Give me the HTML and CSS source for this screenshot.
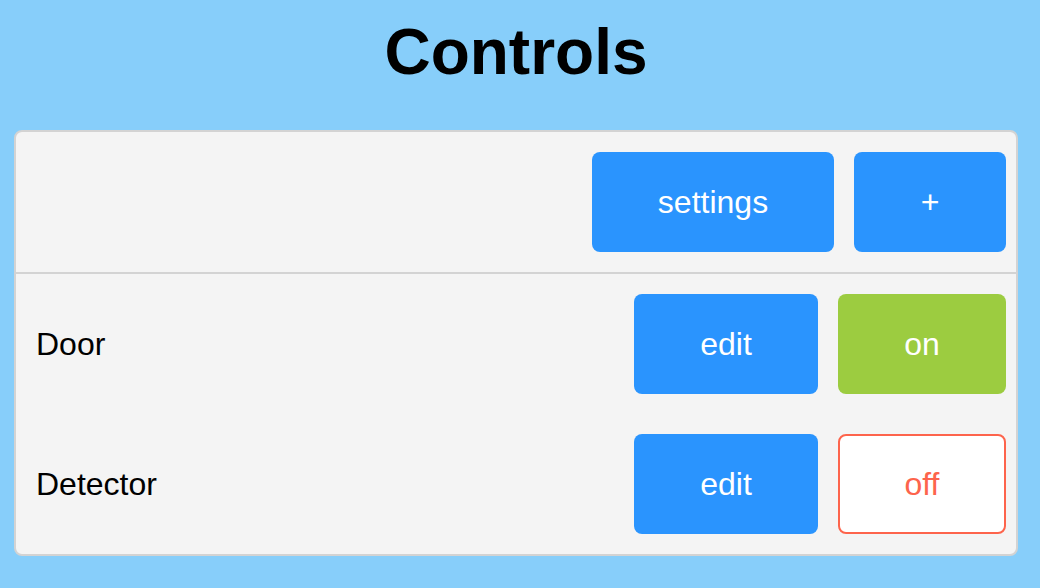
FILE: index.html
```html
<!DOCTYPE html>
<html>
<head>
<meta charset="utf-8">
<link rel="stylesheet" href="styles.css">
</head>
<body>
<h1 class="title">Controls</h1>
<div class="card">
  <div class="card-header">
    <button class="btn btn-blue btn-settings">settings</button>
    <button class="btn btn-blue btn-add">+</button>
  </div>
  <div class="row">
    <span class="label">Door</span>
    <button class="btn btn-blue btn-edit">edit</button>
    <button class="btn btn-on btn-toggle">on</button>
  </div>
  <div class="row">
    <span class="label">Detector</span>
    <button class="btn btn-blue btn-edit">edit</button>
    <button class="btn btn-off btn-toggle">off</button>
  </div>
</div>
</body>
</html>
```
FILE: styles.css
```css
html, body {
  margin: 0;
  padding: 0;
}
body {
  background: #87cefa;
  font-family: "Liberation Sans", Arial, sans-serif;
  padding: 0 22px 0 14px;
  height: 588px;
  box-sizing: border-box;
  overflow: hidden;
}
.title {
  margin: 15px 0 41px;
  font-size: 64px;
  line-height: 74px;
  font-weight: bold;
  text-align: center;
  color: #000;
}
.card {
  background: #f4f4f4;
  border: 2px solid #d3d3d3;
  border-radius: 8px;
  width: 1004px;
  box-sizing: border-box;
}
.card-header {
  display: flex;
  justify-content: flex-end;
  gap: 20px;
  padding: 20px 10px;
  border-bottom: 2px solid #d3d3d3;
}
.row {
  display: flex;
  align-items: center;
  gap: 20px;
  padding: 20px 10px 20px 20px;
}
.label {
  flex: 1;
  font-size: 32px;
  color: #000;
}
.btn {
  height: 100px;
  border: none;
  border-radius: 8px;
  font-family: "Liberation Sans", Arial, sans-serif;
  font-size: 32px;
  color: #fff;
  display: flex;
  align-items: center;
  justify-content: center;
  padding: 0;
  box-sizing: border-box;
}
.btn-blue { background: #2a94fe; }
.btn-settings { width: 242px; }
.btn-add { width: 152px; }
.btn-edit { width: 184px; }
.btn-toggle { width: 168px; }
.btn-on { background: #9ccc40; }
.btn-off {
  background: #fff;
  border: 2px solid #fd644c;
  color: #fd644c;
}
```
